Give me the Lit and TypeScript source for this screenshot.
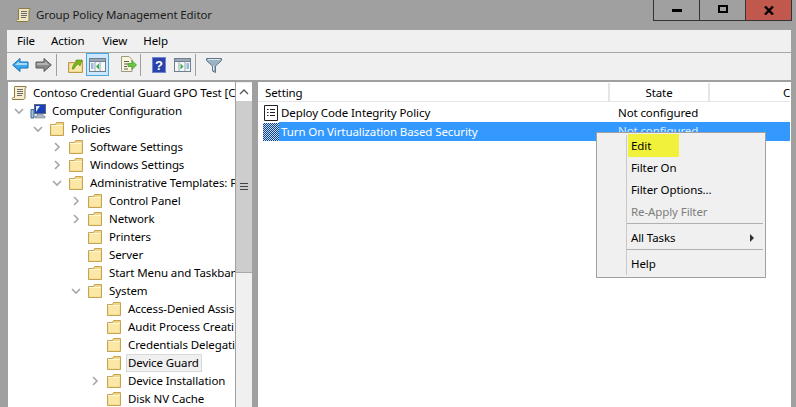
import { LitElement, html, css, svg } from "lit";
import { customElement } from "lit/decorators.js";

const folder = svg`<svg class="ic" width="16" height="16" viewBox="0 0 16 16"><path d="M1.500 3.500V14.500H14.500V1.500H7.500L6.500 3.500Z" fill="#f4d581" stroke="#c4a354"/><path d="M2.500 5H13.500V13.500H2.500Z" fill="#fbe8a6"/><path d="M2 4.500H14" stroke="#fdf6d8"/></svg>`;
const scroll = svg`<svg class="ic" width="16" height="16" viewBox="0 0 16 16"><path d="M4 1.500H15V3C15 3 14 3 14 4V12.500C14 14 13 14.500 12 14.500H1.500C1 14.500 1 12.500 2.500 12.500H3.500V3C3.500 2 3.500 1.500 4 1.500Z" fill="#f7efcf" stroke="#8d7a45"/><path d="M6 4.500H12M6 6.500H12M6 8.500H12M6 10.500H11" stroke="#6b6b6b"/></svg>`;
const computer = svg`<svg class="ic" width="16" height="16" viewBox="0 0 16 16"><rect x="4.500" y="1.500" width="11" height="9" fill="#1a3fb8" stroke="#5b6a80"/><path d="M6 9V3H10Z" fill="#d8ecff"/><path d="M7 11H13V13H15V15H5V13H7Z" fill="#a9b6c6" stroke="#66758a" stroke-width=".5"/><path d="M1 6.500H4V15H1Z" fill="#9fc0dc" stroke="#3e6a94"/></svg>`;

const back = svg`<svg width="17" height="16" viewBox="0 0 17 16"><path d="M.7 8L8 1.500V5H16V11H8V14.500Z" fill="#3fa7ea" stroke="#1670b8"/><path d="M3 8L7 4.500V6H15V8Z" fill="#a6dcfa"/></svg>`;
const forward = svg`<svg width="17" height="16" viewBox="0 0 17 16"><path d="M16.300 8L9 1.500V5H1V11H9V14.500Z" fill="#8a8a8a" stroke="#5a5a5a"/><path d="M2 6H10V4L14 8H2Z" fill="#b4b4b4"/></svg>`;
const upFolder = svg`<svg width="15" height="16" viewBox="0 0 15 16"><path d="M.5 5.500V15.500H14.500V3.500H8L7 5.500Z" fill="#f3d98c" stroke="#b89a4e"/><path d="M2 7H13V14H2Z" fill="#f9e9ae"/><path d="M4 12C5 8 6 6 9 5L8 3L14 3L12 9L10.500 7C8.500 8 7 9.500 6 12Z" fill="#7cb518" stroke="#4e8a10" stroke-width=".6"/></svg>`;
const winBase = svg`<rect x=".5" y=".5" width="16" height="13" fill="#f4f6f8" stroke="#6f7f8f"/><rect x="1" y="1" width="15" height="2.500" fill="#9aa7b4"/><path d="M1 3.500H16" stroke="#6f7f8f"/>`;
const tree = svg`<svg width="17" height="14" viewBox="0 0 17 14">${winBase}<path d="M6 3.500V13M11 3.500V13" stroke="#9aa7b4"/><path d="M2 6H4.500M2 8H4.500M2 10H4.500" stroke="#3a7fc0"/><path d="M10 5.500L7 8.500L10 11.500Z" fill="#35b04a"/></svg>`;
const exportList = svg`<svg width="17" height="17" viewBox="0 0 17 17"><path d="M1.500 .5H9L12 3.500V15.500H1.500Z" fill="#fbf6d9" stroke="#9a9a8a"/><path d="M4 5.500H9M4 8H8M4 10.500H7M4 13H8" stroke="#5a5a5a"/><path d="M8 7.500H12V4.500L16.500 9L12 13.500V10.500H8Z" fill="#6cc644" stroke="#3d9a2a" stroke-width=".7"/></svg>`;
const help = svg`<svg width="14" height="16" viewBox="0 0 14 16"><rect width="14" height="16" fill="#2a43a8"/><rect x=".5" y=".5" width="13" height="15" fill="none" stroke="#6f84d6"/><text x="7" y="13" text-anchor="middle" fill="#fff" font-family="Liberation Sans" font-weight="700" font-size="13">?</text></svg>`;
const props = svg`<svg width="17" height="14" viewBox="0 0 17 14">${winBase}<path d="M5 3.500V13M11 3.500V13" stroke="#9aa7b4"/><path d="M6.500 5.500L9.500 8.500L6.500 11.500Z" fill="#35b04a"/><path d="M12.500 6H15M12.500 8H15M12.500 10H15" stroke="#3a7fc0"/></svg>`;
const filter = svg`<svg width="16" height="16" viewBox="0 0 16 16"><path d="M.5 1.500H15.500V3.500L9.500 9V15.500L6.500 14V9L.5 3.500Z" fill="#9db4c4" stroke="#5f7484"/><path d="M2 2.500H14" stroke="#dfe9f0"/><path d="M7.500 9V13" stroke="#dfe9f0"/></svg>`;
const policyIcon = svg`<svg class="ic" width="16" height="18" viewBox="0 0 16 18"><path d="M1.500 1.500H14.500V16.500H1.500Z" fill="#fff" stroke="#222"/><path d="M4 5.500H5.500M7 5.500H12M4 8.500H5.500M7 8.500H12M4 11.500H5.500M7 11.500H12" stroke="#222"/></svg>`;

interface Node { d: number; t: string; c?: "o" | "c"; i?: "s" | "p"; sel?: boolean }
const nodes: Node[] = [
  { d: 0, t: "Contoso Credential Guard GPO Test [C", i: "s" },
  { d: 1, t: "Computer Configuration", c: "o", i: "p" },
  { d: 2, t: "Policies", c: "o" },
  { d: 3, t: "Software Settings", c: "c" },
  { d: 3, t: "Windows Settings", c: "c" },
  { d: 3, t: "Administrative Templates: P", c: "o" },
  { d: 4, t: "Control Panel", c: "c" },
  { d: 4, t: "Network", c: "c" },
  { d: 4, t: "Printers" },
  { d: 4, t: "Server" },
  { d: 4, t: "Start Menu and Taskbar" },
  { d: 4, t: "System", c: "o" },
  { d: 5, t: "Access-Denied Assis" },
  { d: 5, t: "Audit Process Creati" },
  { d: 5, t: "Credentials Delegati" },
  { d: 5, t: "Device Guard", sel: true },
  { d: 5, t: "Device Installation", c: "c" },
  { d: 5, t: "Disk NV Cache" },
];

@customElement("app-root")
export class AppRoot extends LitElement {
  static styles = css`
    :host { display: block; width: 796px; height: 407px; overflow: hidden; position: relative; background: #a0a0a0;
      font-family: "Noto Sans", "Open Sans", sans-serif; font-size: 11.500px; letter-spacing: -0.1px; color: #000; }
    .title { height: 30px; display: flex; align-items: flex-start; }
    .ticon { margin: 6px 0 0 15px; width: 16px; height: 18px; }
    .ttext { margin: 5px 0 0 5px; line-height: 20px; color: #1c1c1c; flex: 1; }
    .wbtns { display: flex; margin-right: 4px; height: 21px; border: solid #333; border-width: 0 1px 1px 1px; box-sizing: border-box; width: 139px; }
    .wbtn { flex: 1; display: flex; align-items: center; justify-content: center; border-left: 1px solid #333; }
    .wbtn:first-child { border-left: 0; }
    .wbtn.close { background: #c0584e; flex: 0 0 45px; }
    .body { margin: 0 5px 0 7px; }
    .menu { height: 22px; background: #f0f0f0; display: flex; padding-left: 10px; align-items: center; border-bottom: 1px solid #a6a6a6; }
    .menu span { line-height: 22px; margin-right: 16px; }
    .menu span:nth-child(2) { margin-right: 18px; }
    .tools { height: 27px; background: #f0f0f0; display: flex; align-items: center; position: relative; padding-left: 5px; }
    .tb { display: flex; align-items: center; justify-content: center; height: 23px; margin-top: -4px; }
    .tb.on { background: #cce8ff; box-shadow: inset 0 0 0 1px #4aa8e0; }
    .sep { width: 1px; height: 22px; margin-top: -4px; background: #a0a0a0; }
    .panes { display: flex; height: 325px; margin-top: 2px; }
    .treepane { width: 244px; background: #fff; display: flex; margin-left: 1px; overflow: hidden; }
    .tree { width: 227px; overflow: hidden; padding-top: 2px; }
    .row { height: 18px; display: flex; align-items: center; white-space: nowrap; }
    .chev { width: 12px; height: 12px; flex: none; margin-right: 5px; }
    .nochev { width: 17px; flex: none; }
    .ic { flex: none; }
    .lbl { margin-left: 5px; line-height: 16px; padding: 0 2px 0 1px; }
    .row.sel .lbl { background: #f0f0f0; box-shadow: 0 0 0 1px #d9d9d9; }
    .sb { width: 17px; background: #f0f0f0; display: flex; flex-direction: column; border-left: 1px solid #a0a0a0; box-sizing: border-box; }
    .sbtn { height: 18px; margin-top: 1px; background: #fff; display: flex; align-items: center; justify-content: center; flex: none; }
    .thumb { height: 172px; background: #cdcdcd; border-bottom: 1px solid #a8a8a8; display: flex; align-items: center; justify-content: center; box-sizing: border-box; flex: none; }
    .split { width: 6px; }
    .listpane { flex: 1; background: #fff; overflow: hidden; padding: 1px 1px 0 0; position: relative; }
    .hdr { display: grid; grid-template-columns: 352px 100px 1fr; height: 19px; line-height: 20px; border-bottom: 1px solid #e5e5e5; box-sizing: border-box; overflow: hidden; }
    .hdr div { padding-left: 7px; border-right: 2px solid #e5e5e5; white-space: nowrap; overflow: hidden; }
    .hdr .st { padding: 0; text-align: center; }
    .hdr .c { border: 0; padding-left: 73px; }
    .lrows { padding-top: 2px; }
    .lrow { display: grid; grid-template-columns: 351px 1fr; height: 18px; line-height: 18px; white-space: nowrap; }
    .lrow.on { height: 19px; color: #fff; }
    .namecell { display: flex; align-items: center; padding-left: 5px; }
    .lrow .stcell { padding-left: 9px; }
    .lrow.on .stcell { background: #3399ff; color: #dcebff; }
    .namecell span { padding-left: 2px; }
    .namebox { display: flex; align-items: center; flex: 1; height: 100%; }
    .lrow.on .namebox { background: #3399ff; }
    .dither { width: 16px; height: 18px; flex: none;
      background: repeating-conic-gradient(#15427e 0 25%, #bcdcff 0 50%) 0 0 / 2px 2px; }
    .ctx { position: absolute; left: 596px; top: 132px; width: 170px; height: 146px; background: #f0f0f0; border: 1px solid #a0a0a0; box-sizing: border-box; padding: 1px 2px 0 30px; color: #000; }
    .gut { position: absolute; left: 29px; top: 2px; bottom: 2px; width: 1px; background: #c8c8c8; }
    .mi { height: 22px; line-height: 22px; padding-left: 4px; display: flex; justify-content: space-between; align-items: center; }
    .mi.hl { height: 23px; background: #f1f13c; width: 51px; margin-left: 1px; box-sizing: border-box; padding-left: 3px; }
    .mi.off { color: #7d7d7d; }
    .mi.tall { height: 25px; padding-top: 2px; box-sizing: border-box; }
    .msep { height: 1px; background: #b0b0b0; }
    .arrow { width: 0; height: 0; border-left: 4px solid #303030; border-top: 4px solid transparent; border-bottom: 4px solid transparent; margin-right: 9px; }
  `;

  private renderChev(c?: "o" | "c") {
    if (!c) return html`<span class="nochev"></span>`;
    const d = c === "o" ? "M2 4L6 8L10 4" : "M4 2L8 6L4 10";
    return html`<svg class="chev" viewBox="0 0 12 12"><path d="${d}" fill="none" stroke="#a6a6a6" stroke-width="1.600"/></svg>`;
  }

  render() {
    return html`
      <div class="title">
        <svg class="ticon" viewBox="0 0 16 16">
          <path d="M4 1.500H15V3C15 3 14 3 14 4V12.500C14 14 13 14.500 12 14.500H1.500C1 14.500 1 12.500 2.500 12.500H3.500V3C3.500 2 3.500 1.500 4 1.500Z" fill="#efe6c4" stroke="#8d7a45"/>
          <path d="M6 4.500H12M6 6.500H12M6 8.500H12M6 10.500H11" stroke="#6b6b6b"/>
        </svg>
        <div class="ttext">Group Policy Management Editor</div>
        <div class="wbtns">
          <div class="wbtn"><svg width="10" height="3"><rect width="10" height="3" fill="#000"/></svg></div>
          <div class="wbtn"><svg width="10" height="8" style="margin-top:-3px"><rect x="1" y="1" width="8" height="6" fill="none" stroke="#000" stroke-width="2"/></svg></div>
          <div class="wbtn close"><svg width="10" height="9"><path d="M1 .5L9 8.500M9 .5L1 8.500" stroke="#000" stroke-width="2.400"/></svg></div>
        </div>
      </div>
      <div class="body">
        <div class="menu"><span>File</span><span>Action</span><span>View</span><span>Help</span></div>
        <div class="tools">
          <div class="tb" style="width:17px">${back}</div>
          <div class="tb" style="width:17px;margin-left:6px">${forward}</div>
          <div class="sep" style="margin-left:4px"></div>
          <div class="tb" style="width:15px;margin-left:11px">${upFolder}</div>
          <div class="tb on" style="width:23px;margin-left:3px">${tree}</div>
          <div class="tb" style="width:17px;margin-left:11px">${exportList}</div>
          <div class="sep" style="margin-left:3px"></div>
          <div class="tb" style="width:14px;margin-left:11px">${help}</div>
          <div class="tb" style="width:17px;margin-left:8px">${props}</div>
          <div class="sep" style="margin-left:4px"></div>
          <div class="tb" style="width:16px;margin-left:10px">${filter}</div>
        </div>
        <div class="panes">
          <div class="treepane">
            <div class="tree">
              ${nodes.map((n) => html`
                <div class="row ${n.sel ? "sel" : ""}" style="padding-left:${n.d === 0 ? 3 : n.d * 19 - 14}px">
                  ${n.d === 0 ? null : this.renderChev(n.c)}
                  ${n.i === "s" ? scroll : n.i === "p" ? computer : folder}
                  <span class="lbl">${n.t}</span>
                </div>`)}
            </div>
            <div class="sb">
              <div class="sbtn"><svg width="10" height="6"><path d="M1 5L5 1L9 5" fill="none" stroke="#555" stroke-width="1.300"/></svg></div>
              <div class="thumb"><svg width="8" height="7"><path d="M0 .5H8M0 3.500H8M0 6.500H8" stroke="#444"/></svg></div>
            </div>
          </div>
          <div class="split"></div>
          <div class="listpane">
            <div class="hdr"><div>Setting</div><div class="st">State</div><div class="c">C</div></div>
            <div class="lrows">
              <div class="lrow"><div class="namecell">${policyIcon}<span>Deploy Code Integrity Policy</span></div><div class="stcell">Not configured</div></div>
              <div class="lrow on"><div class="namecell"><div class="dither"></div><div class="namebox"><span>Turn On Virtualization Based Security</span></div></div><div class="stcell">Not configured</div></div>
            </div>
          </div>
        </div>
      </div>
      <div class="ctx">
        <div class="gut"></div>
        <div class="mi hl">Edit</div>
        <div class="mi">Filter On</div>
        <div class="mi">Filter Options...</div>
        <div class="mi off">Re-Apply Filter</div>
        <div class="msep"></div>
        <div class="mi tall">All Tasks<span class="arrow"></span></div>
        <div class="msep"></div>
        <div class="mi tall">Help</div>
      </div>
    `;
  }
}
